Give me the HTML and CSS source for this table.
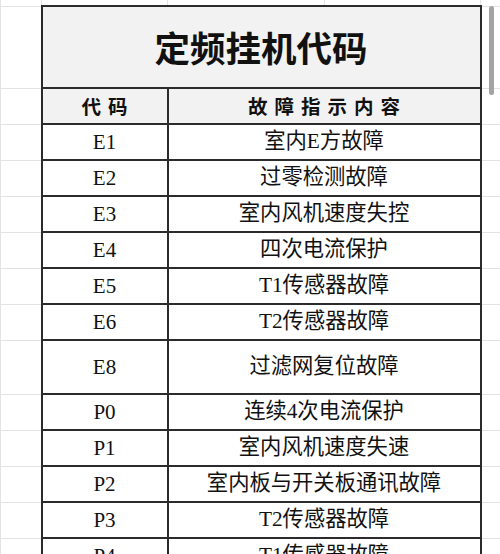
FILE: index.html
```html
<!DOCTYPE html>
<html lang="zh-CN">
<head>
<meta charset="utf-8">
<title>定频挂机代码</title>
<link rel="stylesheet" href="styles.css">
</head>
<body>
<div class="sheet">
  <table class="grid">
    <colgroup>
      <col class="c-gutter"><col class="c-code"><col class="c-a"><col class="c-b"><col class="c-right">
    </colgroup>
    <tr class="r-top"><td class="g"></td><td class="g"></td><td class="g"></td><td class="g"></td><td class="g"></td></tr>
    <tr class="r-title"><td class="g"></td><td class="title" colspan="3">定频挂机代码</td><td class="g"></td></tr>
    <tr class="r-head"><td class="g"></td><td class="head">代码</td><td class="head" colspan="2">故障指示内容</td><td class="g"></td></tr>
    <tr class="r"><td class="g"></td><td class="code">E1</td><td class="desc" colspan="2">室内E方故障</td><td class="g"></td></tr>
    <tr class="r"><td class="g"></td><td class="code">E2</td><td class="desc" colspan="2">过零检测故障</td><td class="g"></td></tr>
    <tr class="r"><td class="g"></td><td class="code">E3</td><td class="desc" colspan="2">室内风机速度失控</td><td class="g"></td></tr>
    <tr class="r"><td class="g"></td><td class="code">E4</td><td class="desc" colspan="2">四次电流保护</td><td class="g"></td></tr>
    <tr class="r"><td class="g"></td><td class="code">E5</td><td class="desc" colspan="2">T1传感器故障</td><td class="g"></td></tr>
    <tr class="r"><td class="g"></td><td class="code">E6</td><td class="desc" colspan="2">T2传感器故障</td><td class="g"></td></tr>
    <tr class="r r-tall"><td class="g"></td><td class="code">E8</td><td class="desc" colspan="2">过滤网复位故障</td><td class="g"></td></tr>
    <tr class="r"><td class="g"></td><td class="code">P0</td><td class="desc" colspan="2">连续4次电流保护</td><td class="g"></td></tr>
    <tr class="r"><td class="g"></td><td class="code">P1</td><td class="desc" colspan="2">室内风机速度失速</td><td class="g"></td></tr>
    <tr class="r"><td class="g"></td><td class="code">P2</td><td class="desc" colspan="2">室内板与开关板通讯故障</td><td class="g"></td></tr>
    <tr class="r"><td class="g"></td><td class="code">P3</td><td class="desc" colspan="2">T2传感器故障</td><td class="g"></td></tr>
    <tr class="r"><td class="g"></td><td class="code">P4</td><td class="desc" colspan="2">T1传感器故障</td><td class="g"></td></tr>
  </table>
  <div class="scrollbar"></div>
</div>
</body>
</html>
```
FILE: styles.css
```css
html, body {
  margin: 0;
  padding: 0;
  background: #ffffff;
  overflow: hidden;
}
.sheet {
  position: relative;
  width: 500px;
  height: 554px;
  overflow: hidden;
}
.grid {
  border-collapse: collapse;
  table-layout: fixed;
  width: 521px;
  margin-top: -1px;
}
.c-gutter { width: 41px; }
.c-code { width: 126px; }
.c-a { width: 157px; }
.c-b { width: 156px; }
.c-right { width: 41px; }

.grid td {
  padding: 0;
  text-align: center;
  vertical-align: middle;
  border: 1px solid #e3e3e3;
  color: #111;
}
.r-top td { height: 5px; }
.r-title td { height: 80px; }
.r-head td { height: 34px; }
.r td { height: 34px; }
.r-tall td { height: 52px; }

.grid td.title,
.grid td.head,
.grid td.code,
.grid td.desc {
  border: 2px solid #2b2b2b;
}
.title {
  background: #f2f2f2;
  font-family: "Noto Sans CJK SC", "Noto Sans", sans-serif;
  font-weight: 700;
  font-size: 35.5px;
  line-height: 1;
  color: #0a0a0a;
}
.head {
  background: #f2f2f2;
  font-family: "Noto Sans CJK SC", "Noto Sans", sans-serif;
  font-weight: 700;
  font-size: 19.5px;
  letter-spacing: 7px;
  text-indent: 7px;
  line-height: 1;
  color: #141414;
}
.code {
  font-family: "Liberation Serif", "Noto Sans CJK SC", serif;
  font-size: 21px;
  line-height: 1;
  color: #111;
}
.desc {
  font-family: "Liberation Serif", "Noto Sans CJK SC", serif;
  font-size: 21.3px;
  line-height: 1;
  color: #0d0d0d;
}
.scrollbar {
  position: absolute;
  left: 489px;
  top: 6px;
  width: 5px;
  height: 89px;
  border-radius: 3px;
  background: #a3a3a3;
}
```
